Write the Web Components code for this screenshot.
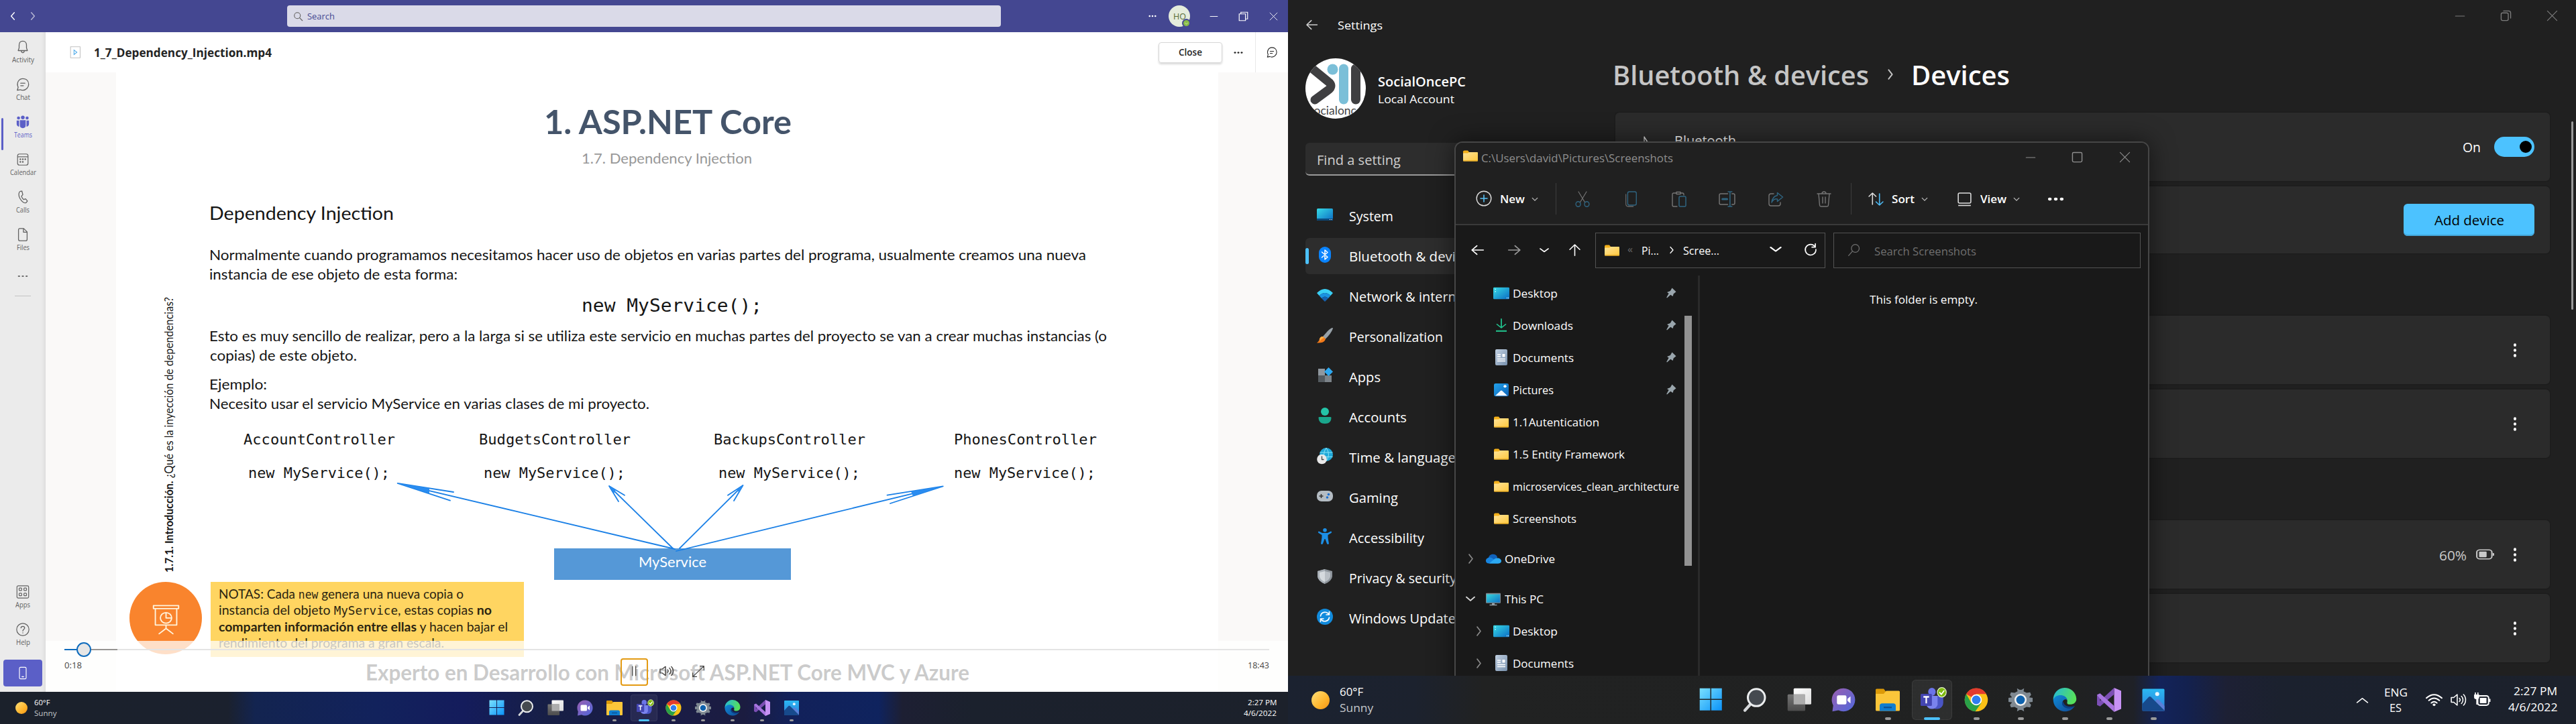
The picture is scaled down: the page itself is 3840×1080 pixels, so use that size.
<!DOCTYPE html>
<html lang="en">
<head>
<meta charset="utf-8">
<title>Desktop</title>
<style>
html,body{margin:0;padding:0;background:#202020}
body{display:flex;width:3840px;height:1080px;overflow:hidden;font-family:"Open Sans","Noto Sans",sans-serif}
</style>
</head>
<body>
<desk-screen><teams-app></teams-app><task-bar k="1"></task-bar></desk-screen>
<desk-screen><settings-app></settings-app><explorer-window></explorer-window><task-bar k="1.5"></task-bar></desk-screen>
<script>
const lin=(id,a,b,x2=1,y2=1)=>`<linearGradient id="${id}" x1="0" y1="0" x2="${x2}" y2="${y2}"><stop offset="0" stop-color="${a}"/><stop offset="1" stop-color="${b}"/></linearGradient>`;
const st=(d,w=1.4,c='currentColor',x='')=>`<path d="${d}" fill="none" stroke="${c}" stroke-width="${w}" stroke-linecap="round" stroke-linejoin="round" ${x}/>`;
const ICONS={
 chevL:st('M16 3L8 12L16 21',2.4), chevR:st('M8 3L16 12L8 21',2.6), chevD:st('M3 8L12 17L21 8',3), chevU:st('M3 17L12 8L21 17',2),
 search:st('M15 15L22 22',1.7)+`<circle cx="10" cy="10" r="7.2" fill="none" stroke="currentColor" stroke-width="1.7"/>`,
 searchFlip:st('M9 14L2 22',1.5)+`<circle cx="14" cy="9" r="7" fill="none" stroke="currentColor" stroke-width="1.5"/>`,
 more:`<g fill="currentColor"><circle cx="3.5" cy="12" r="2.6"/><circle cx="12" cy="12" r="2.6"/><circle cx="20.500" cy="12" r="2.6"/></g>`,
 moreV:`<g fill="currentColor"><circle cx="12" cy="3" r="2.7"/><circle cx="12" cy="12" r="2.7"/><circle cx="12" cy="21" r="2.7"/></g>`,
 min:st('M2 12H22',1.8), close:st('M2 2L22 22M22 2L2 22',1.6), max:`<rect x="2" y="2" width="20" height="20" rx="2.500" fill="none" stroke="currentColor" stroke-width="2"/>`,
 restore:`<path d="M2 6H17V22H2ZM6 6V2H22V18H17" fill="none" stroke="currentColor" stroke-width="1.9"/>`,
 restoreR:`<rect x="2" y="6" width="15" height="16" rx="3" fill="none" stroke="currentColor" stroke-width="1.900"/>`+st('M7 2H18Q22 2 22 6V17',1.9),
 bell:st('M12 2.500C8 2.500 6 5.500 6 9V13.500L4.500 18H19.500L18 13.500V9C18 5.500 16 2.500 12 2.500ZM9.500 18C9.700 20.500 10.700 21.500 12 21.500S14.300 20.500 14.500 18'),
 chat:st('M3 21.500L4.500 16.500C1.200 9.500 5.500 2.500 12 2.500S21.500 7 21.500 12S17 21.500 12 21.500C10.500 21.500 9 21.200 7.800 20.500ZM8.500 10H15.500M8.500 14H13'),
 teams:`<g fill="currentColor"><circle cx="5" cy="5.500" r="2.500"/><circle cx="12" cy="4.500" r="3"/><circle cx="19" cy="5.500" r="2.500"/><path d="M2 9.500H6V19.500Q2 19 2 15ZM22 9.500H18V19.500Q22 19 22 15ZM7.300 9H16.700V17Q16.700 22 12 22T7.300 17Z"/></g>`,
 cal:`<rect x="3.500" y="3" width="17" height="18" rx="3" fill="none" stroke="currentColor" stroke-width="1.300"/><path d="M3.500 7.500H20.500" stroke="currentColor" stroke-width="1.300"/><g fill="currentColor"><circle cx="8" cy="11.500" r="1.300"/><circle cx="12" cy="11.500" r="1.300"/><circle cx="16" cy="11.500" r="1.300"/><circle cx="8" cy="15.800" r="1.300"/><circle cx="12" cy="15.800" r="1.300"/></g>`,
 phone:st('M8 2.500L10.500 2.200L12 8L9.800 10.500C10.500 13 12 15 13.500 16L16.500 14.800L19.500 18.500L17.500 21C15 22.500 10.500 20 7.500 14.500S5 4 8 2.500Z'),
 file:st('M7 2H13.500L19 7.500V19.500Q19 22 16.500 22H7.500Q5 22 5 19.500V4.500Q5 2 7 2ZM13 2V8H19'),
 apps:`<g fill="none" stroke="currentColor" stroke-width="1.300"><rect x="2.500" y="2" width="19" height="20" rx="2"/><rect x="6" y="5.500" width="4.200" height="4.200" rx="1"/><rect x="13.800" y="5.500" width="4.200" height="4.200" rx="1"/><rect x="6" y="14" width="4.200" height="4.200" rx="1"/><rect x="13.800" y="14" width="4.200" height="4.200" rx="1"/></g>`,
 help:`<circle cx="12" cy="12" r="10" fill="none" stroke="currentColor" stroke-width="1.300"/>`+st('M9 9.500C9 6 15 6 15 9.500C15 11.800 12 11.800 12 14.500M12 17.300V17.600',1.4),
 mobile:st('M8 2.500H16Q18 2.500 18 4.500V19.500Q18 21.500 16 21.500H8Q6 21.500 6 19.500V4.500Q6 2.500 8 2.500ZM10.500 18H13.500'),
 video:`<rect x="4" y="1" width="18" height="22" fill="#fff" stroke="#bbb" stroke-width="1.200"/><path d="M10.500 7.500L16 12L10.500 16.500Z" fill="none" stroke="#4aa8e8" stroke-width="1.300"/>`,
 board:st('M2 2.500H22V5H2ZM3.500 5V19H20.500V5M12 19V22M12 22L6.500 26.500M12 22L17.500 26.500',1,'#fff3dc')+st('M12 8.500V13H16.500A4.500 4.500 0 1 1 12 8.500A4.500 4.500 0 0 1 16.500 13',1,'#fff3dc'),
 pause:st('M7 2V22M16 2V22',2.4), vol:st('M2 8.500V15.500H5.500L10.500 20V4L5.500 8.500ZM13.500 9.500C15 11 15 13 13.500 14.500M16.500 6.500C19.500 9.500 19.500 14.500 16.500 17.500M19.500 4C23.500 8 23.500 16 19.500 20',1.5),
 expand:st('M2 22L22 2M15 2H22V9M2 15V22H9',1.5),
 left:st('M22 12H3M11 3.500L2.500 12L11 20.500',2), right:st('M2 12H21M13 3.500L21.500 12L13 20.500',2), up:st('M12 22V3M3.500 11L12 2.500L20.500 11',1.8),
 refresh:st('M20 7.500A9.500 9.500 0 1 0 21.500 12M20.500 2V8H14.500',2),
 folder:`<defs>${lin('f','#ffe49a','#ffc83d')}</defs><path d="M1 4Q1 2 3 2H8L10 5V9H1Z" fill="#f4b01a"/><path d="M1 8Q1 7 2 7H8L10 5H22Q23 5 23 6V21Q23 22 22 22H2Q1 22 1 21Z" fill="url(#f)"/><path d="M1 20.500H23V21Q23 22 22 22H2Q1 22 1 21Z" fill="#e8a91f"/>`,
 desk:`<defs>${lin('d','#36dbe6','#0c6cc4')}</defs><rect x="0" y="2" width="24" height="20" rx="1.500" fill="url(#d)"/><path d="M2.500 5h1.500M2.500 9h1.500M20 20h1M22 20h1" stroke="#d8fbff" stroke-width="1.500"/>`,
 down:st('M12 1V15.500M5.500 10L12 16L18.500 10',1.8,'#21c08c')+`<path d="M4 21.500H20" stroke="#21c08c" stroke-width="2.400"/>`,
 docs:`<defs>${lin('o','#c1d0e2','#7891ad')}</defs><rect x="3" y="0" width="18" height="24" rx="2" fill="url(#o)"/><path d="M6 8H11M6 11H11M6 14.500H18M6 17.500H18" stroke="#fff" stroke-width="1.500"/><path d="M13.500 7H17.500V11.500H13.500Z" fill="#fff"/>`,
 pics:`<defs>${lin('p','#23a3ec','#0b62b8')}</defs><rect x="1" y="1" width="22" height="22" rx="2.500" fill="url(#p)"/><circle cx="17.500" cy="6" r="2.200" fill="#fff"/><path d="M3 22L11 13.500Q12 12.500 13 13.500L21 22Z" fill="#f2f8ff"/>`,
 pin:`<path d="M14 2L22 9.500L17 13.500L15.500 18.500L11 15.500L4 22L3 21L7.500 13L4 10.500L10.500 8Z" fill="#9aa6ad"/>`,
 cloud:`<path d="M5 10C6 3 16 2 18 9L15 17H5Z" fill="#1062bb"/><path d="M5.500 20C0 20-1 12 5 10C8 9 10 10.500 13 13L20 20Z" fill="#1785e0"/><path d="M6 20L13.500 12.500C18 9 24 11 24 16C24 18.500 22 20 20 20Z" fill="#2ca9f2"/>`,
 pc:`<defs>${lin('m','#36d6dc','#1072c6')}</defs><rect x="1" y="2" width="22" height="17" rx="1" fill="#808b92"/><rect x="2" y="4" width="20" height="14" fill="url(#m)"/><path d="M10 19H14V21.500H17.500V23H6.500V21.500H10Z" fill="#95a0a7"/>`,
 plus:`<circle cx="12" cy="12" r="10.800" fill="none" stroke="#ddd" stroke-width="1.400"/>`+st('M12 7V17M7 12H17',1.6,'#58c1f5'),
 cut:st('M5.500 1L16 17M18.500 1L8 17',1.3,'#757575')+`<g fill="none" stroke="#2f6480" stroke-width="1.500"><circle cx="5" cy="19.500" r="3.800"/><circle cx="19" cy="19.500" r="3.800"/></g>`,
 copy:`<rect x="7" y="1" width="14" height="20" rx="2.500" fill="none" stroke="#2f6480" stroke-width="1.500"/>`+st('M4 5V19Q4 23 8 23H16',1.3,'#6a6a6a'),
 paste:st('M8 3H4Q2 3 2 5V21Q2 23 4 23H9M14 3H17Q19 3 19 5V6M8 1.500H14V4.500H8Z',1.4,'#757575')+`<rect x="12" y="8" width="10" height="15" rx="1.500" fill="none" stroke="#2f6480" stroke-width="1.500"/>`,
 rename:st('M13 4H3Q1 4 1 6V18Q1 20 3 20H13M19 4H21Q23 4 23 6V18Q23 20 21 20H19',1.4,'#757575')+st('M13.500 1H19M16.200 1V23M13.500 23H19',1.500,'#2f6480')+st('M5.500 12H12',3,'#2f6480'),
 share:st('M9 4H5Q2 4 2 7V19Q2 22 5 22H16Q19 22 19 19V17',1.4,'#757575')+st('M14.500 2.500L22.500 9L14.500 15.500V12Q9 11 6 17Q7 8 14.500 6.500Z',1.5,'#2f6480'),
 trash:st('M2 4H22M9 4Q9 1 12 1T15 4M4 4L5.500 21Q5.700 23 7.500 23H16.500Q18.300 23 18.500 21L20 4M10 9V18M14 9V18',1.4,'#757575'),
 sort:st('M7 20V3M2 8L7 3L12 8',1.5,'#ddd')+st('M17 4V21M12 16L17 21L22 16',1.6,'#4cb7f0'),
 view:`<rect x="3" y="3" width="18" height="15" rx="2" fill="none" stroke="#ddd" stroke-width="1.500"/><path d="M3 21.500H21" stroke="#ddd" stroke-width="1.600"/>`,
 system:`<defs>${lin('s','#36dbe6','#0c6cc4')}</defs><rect y="3" width="24" height="18" rx="1.500" fill="url(#s)"/><path d="M0 18H24V19.500Q24 21 22.500 21H1.500Q0 21 0 19.500Z" fill="#0b4a7c"/><path d="M19 19.500h1M21.500 19.500h1" stroke="#fff"/>`,
 bt:`<rect x="3" y="0" width="18" height="24" rx="9" fill="#0a84ff"/>`+st('M7.500 8L16 15.500L12 19V5L16 8.500L7.500 16',1.500,'#fff'),
 btLine:st('M5 8L19 17L12 23V1L19 7L5 17',1.500,'#e8e8e8'),
 net:`<path d="M0 9Q12-3 24 9L20.500 13Q12 5 3.500 13Z" fill="#3ad0f5"/><path d="M3.500 13Q12 5 20.500 13L17 17Q12 12 7 17Z" fill="#1a92e0"/><path d="M7 17Q12 12 17 17L12 22Z" fill="#1461b0"/>`,
 brush:`<path d="M23.500 1Q21 1 16 6L9 14L12.500 18Q21 10 24 2Z" fill="#97a1a8"/><path d="M9 14L13 17.500Q12 24 0 23.500Q3.500 21 4 17.500Q5.500 13.500 9 14Z" fill="#f27a1a"/><path d="M4 17.500Q5.500 13.500 9 14L11 16Q7 17 5 21Z" fill="#ffae45"/>`,
 appsC:`<path d="M2 2H12V12H2Z" fill="#8f979e"/><path d="M2 12H12V22H2Z" fill="#555b60"/><path d="M12 12H22V22H12Z" fill="#7c8389"/><path d="M17.500 0L24 6.500L17.500 13L11 6.500Z" fill="#2ea8f0"/>`,
 person:`<circle cx="12" cy="6" r="6" fill="#24c4a8"/><path d="M2.500 14.500Q2.500 14 4 14H20Q21.500 14 21.500 15C21.500 21 18 24 12 24S2.500 21 2.500 14.500Z" fill="#1aa68c"/>`,
 time:`<circle cx="14" cy="10" r="10" fill="#20a8d8"/><path d="M14 0Q7 10 14 20Q21 10 14 0M4.500 7H23.500M4.500 13.500H23.500" fill="none" stroke="#86e2f5" stroke-width="1"/><circle cx="7.500" cy="17" r="7.300" fill="#e9e9e9"/>`+st('M7.500 13V17.500H10',1.300,'#444'),
 game:`<rect x="0" y="4" width="24" height="16" rx="7" fill="#b4bcc3"/><path d="M6.500 9V15M3.500 12H9.500" stroke="#333" stroke-width="1.600"/><circle cx="17.500" cy="9.500" r="1.800" fill="#1c6fd0"/><circle cx="15.500" cy="14" r="1.800" fill="#1c6fd0"/>`,
 access:`<circle cx="12" cy="2.800" r="2.800" fill="#1c8fe6"/><path d="M3 4.500L8 7H16L21 4.500Q23 5.500 21.500 7L16.500 10V14L18 23Q16.500 25 15 23L12.500 16H11.500L9 23Q7.500 25 6 23L7.500 14V10L2.500 7Q1 5.500 3 4.500Z" fill="#1c8fe6"/>`,
 shield:`<path d="M12 1L23 4V12Q22 19 12 23Q2 19 1 12V4Z" fill="#8d949b"/><path d="M12 1V23Q2 19 1 12V4Z" fill="#a9b0b7"/><path d="M12 4L20 6V12Q19 17 12 20Z" fill="#b9bfc5"/><path d="M12 4V20Q5 17 4 12V6Z" fill="#d5dade"/>`,
 update:`<circle cx="12" cy="12" r="12" fill="#118bdd"/>`+st('M5.500 11A6.800 6.800 0 0 1 18 8.500M18.500 4.500V9H14M18.500 13A6.800 6.800 0 0 1 6 15.500M5.500 19.500V15H10',1.600,'#fff'),
 batt:`<rect x="1" y="4" width="20" height="16" rx="4" fill="none" stroke="#c9c9c9" stroke-width="1.800"/><rect x="4" y="7" width="10" height="10" rx="1" fill="#c9c9c9"/><path d="M22 9.500H23Q24 9.500 24 10.500V13.500Q24 14.500 23 14.500H22Z" fill="#c9c9c9"/>`,
 win:`<defs>${lin('w','#7ae0ff','#0a92f8')}</defs><path d="M0.500 0.500H11.500V11.500H0.500ZM12.500 0.500H23.500V11.500H12.500ZM0.500 12.500H11.500V23.500H0.500ZM12.500 12.500H23.500V23.500H12.500Z" fill="url(#w)"/>`,
 tsearch:`<path d="M7 17L2 22.500" stroke="#d5d8da" stroke-width="2.800" stroke-linecap="round"/><circle cx="13.500" cy="9.700" r="8.500" fill="#454a50" stroke="#eceeef" stroke-width="2"/>`,
 tview:`<defs>${lin('t1','#ffffff','#dcdcdc')}${lin('t2','#747474','#4c4c4c',0,1)}</defs><rect x="6.500" y="0.500" width="17.500" height="16" rx="1" fill="url(#t1)"/><rect x="0.500" y="6.500" width="17.500" height="16.500" rx="1" fill="url(#t2)"/><path d="M6.500 6.500H18V16.500H6.500Z" fill="#adadad"/>`,
 tchat:`<defs>${lin('c','#9a5fb0','#5068dc')}</defs><path d="M12 0.500A11.500 11.500 0 1 1 7 22.300L1 23.500L1.800 17.500A11.500 11.500 0 0 1 12 0.500Z" fill="url(#c)"/><rect x="5.500" y="7.500" width="9.500" height="9" rx="1.500" fill="#fff"/><path d="M16 11L19 8.500V15.500L16 13Z" fill="#fff"/>`,
 texp:`<path d="M0 2Q0 1 1 1H8L10 3.500V8H0Z" fill="#dc9a08"/><path d="M0 6H8L10.500 3H23Q24 3 24 4V22Q24 23 23 23H1Q0 23 0 22Z" fill="#fbc63a"/><path d="M4 23V18Q4 15.500 6.500 15.500H17.500Q20 15.500 20 18V23Z" fill="#0f7dd0"/><path d="M8 19.500H16" stroke="#0b4f92" stroke-width="1.400"/>`,
 tteams:`<circle cx="12" cy="4" r="4" fill="#6b74e8"/><path d="M8 8H22Q24 8 24 10V15A6 6 0 0 1 18 21H15Z" fill="#4a55c5"/><path d="M6 8H18V17A6.500 6.500 0 0 1 6 17Z" fill="#7a83ee"/><rect x="0" y="6" width="12" height="12" rx="1" fill="#4446b2"/><path d="M3 9H9M6 9V15.500" stroke="#fff" stroke-width="1.600"/><circle cx="22.500" cy="4.500" r="4.700" fill="#7fba10" stroke="#e8f5c8" stroke-width=".8"/>`+st('M20.300 4.700L22 6.500L24.800 3',1.300,'#fff'),
 chrome:`<circle cx="12" cy="12" r="11.500" fill="#fbc116"/><path d="M12 12L2 6.200A11.500 11.500 0 0 1 22 6.200H12Z" fill="#e33b2e"/><path d="M2 6.200A11.500 11.500 0 0 0 11 23.500L17 15L7 15Z" fill="#2aa148"/><circle cx="12" cy="12" r="5.500" fill="#fff"/><circle cx="12" cy="12" r="4.300" fill="#2f7df0"/>`,
 gear:`<path d="M9 3.500L8.500 0.500L11 2H13L15.500 0.500L15 3.500L18 5L21.500 4.500L22.500 7L20.500 9.500L24 10V14L20.500 14.500L22.500 17L21.500 19.500L18 19L15 20.500L15.500 23.500L13 22H11L8.500 23.500L9 20.500L6 19L2.500 19.500L1.500 17L3.500 14.500L0 14V10L3.500 9.500L1.500 7L2.500 4.500L6 5Z" fill="#7f8992"/><circle cx="12" cy="12" r="6" fill="#f2f2f2"/><circle cx="12" cy="12" r="4.300" fill="#0e62ae"/>`,
 edge:`<defs>${lin('e','#23b8dc','#56e05c',1,.3)}${lin('g','#0f8ad8','#114a94')}</defs><path d="M0.500 12A11.500 11.500 0 0 1 23.500 11C23.500 15 20 17 16 16.500C13.500 16 14.500 14.500 14.500 13C14 8 5 6 0.500 12Z" fill="url(#e)"/><path d="M0.500 12C2 6 13 5.500 14.500 12C10 9.500 7 17 13 19.500C17 21 20 19.500 22 18C19 23 14 24 10 23.300C4 22 0.500 17 0.500 12Z" fill="url(#g)"/><path d="M9.500 14C8 18 13 21 17 20.500C19 20.300 21 19 22 18C18 19.500 11.500 19 10.500 14Z" fill="#0b3f85"/>`,
 vs:`<path d="M17 0L24 3V21L17 24Z" fill="#c792f5"/><path d="M0 7L3 6V18L0 17Z" fill="#7c4fb5"/><path d="M0 17L3 18.500L17 6.500V0L3 13Z" fill="#7c4fb5"/><path d="M0 7L3 5.500L17 18V24L3 11Z" fill="#a876e0"/>`,
 photo:`<defs>${lin('h','#2ab8f2','#2e7fdc',0,1)}</defs><rect x="1" y="1" width="22" height="22" rx="1" fill="url(#h)"/><path d="M10 17L15.500 11.500Q16.500 11 17.500 12L23 18V23H10Z" fill="#5b7fd8"/><path d="M1 16L7.500 9Q8.500 8.300 9.500 9L23 22.500V23H1Z" fill="#174a8c"/><circle cx="15.800" cy="6.200" r="2" fill="#e8f6ff"/>`,
 wifi:st('M1 9Q12-2 23 9M4.500 13Q12 5.500 19.500 13M8 17Q12 13 16 17',2,'#fff')+`<circle cx="12" cy="20" r="2" fill="#fff"/>`,
 plug:`<rect x="6" y="6" width="15" height="14" rx="3" fill="none" stroke="#fff" stroke-width="1.800"/><rect x="9" y="9" width="9" height="8" fill="#fff"/><path d="M21.500 10.500H23.500V15H21.500ZM1 4H8V8Q8 11 5.500 11V19H4V11Q1 11 1 8ZM2 1H3.500V4H2ZM5.500 1H7V4H5.500Z" fill="#fff"/>`,
 logo:`<defs><clipPath id="q"><circle cx="45" cy="45" r="45"/></clipPath></defs><g clip-path="url(#q)"><rect width="90" height="90" fill="#fff"/><path d="M11 16L33 34Q43 41 33 48L14 62" fill="none" stroke="#3f3f41" stroke-width="13" stroke-linecap="round" stroke-linejoin="round"/><circle cx="40.500" cy="16.500" r="8" fill="#7bbfd8"/><path d="M57 15.500V61.500" stroke="#7bbfd8" stroke-width="14" stroke-linecap="round"/><path d="M75 15.500V61.500" stroke="#3f3f41" stroke-width="14" stroke-linecap="round"/><text x="45" y="84" text-anchor="middle" textLength="80" lengthAdjust="spacingAndGlyphs" font-family="Lato" font-size="18" fill="#444">socialonce</text></g>`
};
const VB={board:'0 0 24 28',logo:'0 0 90 90'};
class UiIcon extends HTMLElement{
 constructor(){super();this.attachShadow({mode:'open'});}
 connectedCallback(){
  const n=this.getAttribute('name'),w=this.getAttribute('w'),h=this.getAttribute('h')||w;
  this.shadowRoot.innerHTML=`<style>:host{display:block;flex:none;width:${w}px;height:${h}px}svg{display:block;width:100%;height:100%;overflow:visible}</style><svg viewBox="${VB[n]||'0 0 24 24'}" preserveAspectRatio="none">${ICONS[n]}</svg>`;
 }
}
// One line of text condensed or widened to a given measure.
class TextLine extends HTMLElement{
 constructor(){super();this.attachShadow({mode:'open'});}
 connectedCallback(){
  const w=+this.getAttribute('w'),s=this.getAttribute('s');
  this.shadowRoot.innerHTML=`<style>:host{display:block;flex:none;width:${w}px;font-size:${s}px;white-space:nowrap}span{display:inline-block;vertical-align:top;transform-origin:0 50%;white-space:pre}</style><span><slot></slot></span>`;
  const sp=this.shadowRoot.querySelector('span');
  sp.style.transform=`scaleX(${w/parseFloat(getComputedStyle(sp).width)})`;
 }
}
const T=(t,w,s,css='')=>`<t-x w="${w}" s="${s}" style="${css}">${t}</t-x>`;
const I=(n,w,h=w,css='')=>`<ui-icon name="${n}" w="${w}" h="${h}" style="${css}"></ui-icon>`;
const ml=n=>`margin-left:${n}px;`;
const define=(tag,html)=>customElements.define(tag,class extends HTMLElement{
 constructor(){super();this.attachShadow({mode:'open'});}
 connectedCallback(){this.shadowRoot.innerHTML=typeof html==='function'?html(this):html;}
});

customElements.define('ui-icon',UiIcon);
customElements.define('t-x',TextLine);

define('desk-screen',`<style>:host{position:relative;display:flex;flex-direction:column;width:1920px;height:1080px;overflow:hidden;flex:none}</style><slot></slot>`);

define('rail-item',el=>`<style>:host{display:flex;flex-direction:column;align-items:center;height:56px;color:${el.hasAttribute('active')?'#5b5fc7':'#616161'};position:relative}
 .bar{position:absolute;left:2px;top:4px;width:2.500px;height:48px;background:#5b5fc7;border-radius:2px}</style>
 ${el.hasAttribute('active')?'<div class="bar"></div>':''}${I(el.getAttribute('icon'),22,22,'margin-top:-1px')}${T(el.getAttribute('label'),el.getAttribute('w'),10.2,'line-height:16px;margin-top:0px')}`);

define('video-slide',`<style>
:host{display:flex;flex-direction:column;position:relative;width:1643px;height:924px;background:#fff;font-family:Lato,sans-serif;color:#151515;margin-left:105px}
.m{font-family:"DejaVu Sans Mono",monospace}.r{display:flex}
svg.arrows{position:absolute;left:0;top:0;width:1643px;height:924px;overflow:visible}
.v{position:absolute;left:64px;top:333px;width:30px;height:413px}
.v>div{transform:rotate(-90deg);transform-origin:0 0;display:flex;margin-top:413px;width:413px;height:30px;line-height:30px}
.svc{margin:97px 0 0 653px;width:353px;height:47px;background:#5598d7;color:#fff;display:flex;justify-content:center}
.note{display:flex;margin:3px 0 0 20px}
.disc{width:108px;height:108px;border-radius:50%;background:#f9842d;display:flex;justify-content:center;align-items:center}
.card{margin-left:13px;width:467px;height:106px;padding-top:6px;background:#ffd561;color:#2b2410}
.card .r{height:24.300px;line-height:24.300px;padding-left:12px}
</style>
${T('1. ASP.NET Core',369,50.5,'font-weight:700;color:#44546a;line-height:60px;margin:43px 0 0 638px')}
${T('1.7. Dependency Injection',254,21.5,'color:#989898;line-height:30px;margin:10px 0 0 694px')}
${T('Dependency Injection',275,27.4,'line-height:40px;margin:47px 0 0 139px')}
${T('Normalmente cuando programamos necesitamos hacer uso de objetos en varias partes del programa, usualmente creamos una nueva',1307,22,'line-height:29px;margin:27px 0 0 139px')}
${T('instancia de ese objeto de esta forma:',370,22,'line-height:29px;margin:0 0 0 139px')}
<div class="r m">${T('new MyService();',269,26,'line-height:40px;margin:13px 0 0 694px')}</div>
${T('Esto es muy sencillo de realizar, pero a la larga si se utiliza este servicio en muchas partes del proyecto se van a crear muchas instancias (o',1338,22,'line-height:29px;margin:10px 0 0 139px')}
${T('copias) de este objeto.',219,22,'line-height:29px;margin:0 0 0 140px')}
${T('Ejemplo:',86,22,'line-height:29px;margin:14px 0 0 139px')}
${T('Necesito usar el servicio MyService en varias clases de mi proyecto.',656,22,'line-height:29px;margin:0 0 0 139px')}
<div class="r m" style="line-height:30px;margin-top:25px">${T('AccountController',226,20.5,ml(190))}${T('BudgetsController',226,20.5,ml(125))}${T('BackupsController',226,20.5,ml(124))}${T('PhonesController',213,20.5,ml(132))}</div>
<div class="r m" style="line-height:30px;margin-top:20px">${T('new MyService();',211,20.5,ml(197))}${T('new MyService();',211,20.5,ml(140))}${T('new MyService();',211,20.5,ml(139))}${T('new MyService();',211,20.5,ml(140))}</div>
<div class="svc">${T('MyService',101,21.5,'line-height:41px')}</div>
<div class="note"><div class="disc">${I('board',45,49,'margin-top:2px')}</div><div class="card">
<div class="r">${T('NOTAS: Cada <span style="font-family:DejaVu Sans Mono;font-size:.86em">new</span> genera una nueva copia o',365,19.5)}</div>
<div class="r">${T('instancia del objeto <span style="font-family:DejaVu Sans Mono;font-size:.9em">MyService</span>, estas copias <b>no</b>',407,19.5)}</div>
<div class="r">${T('<b>comparten información entre ellas</b> y hacen bajar el',431,19.5)}</div>
<div class="r">${T('rendimiento del programa a gran escala.',336,19.5)}</div></div></div>
${T('Experto en Desarrollo con Microsoft ASP.NET Core MVC y Azure',900,31.5,'font-weight:700;color:#383838;line-height:40px;margin:3px 0 0 372px')}
<div class="v"><div>${T('<b>1.7.1. Introducción.</b> ¿Qué es la inyección de dependencias?',411,17)}</div></div>
<svg class="arrows" viewBox="173 108 1643 924"><g fill="none" stroke="#1b80e6" stroke-width="1.800" stroke-linecap="round">
<path d="M1006 819L592.700 720.800L676 734M592.700 720.800L671 746.600"/><path d="M1003 818L908 725L931 738.700M908 725L922 748"/><path d="M1013 818L1107.500 724L1085 738.700M1107.500 724L1094 747"/><path d="M1008 822L1405.700 725.300L1322.500 738.700M1405.700 725.300L1327 751"/></g>
<g fill="#2a8cf0"><path d="M593 721L640 728L640 736Z"/><path d="M1405.700 725.300L1358 733L1361 740Z"/><path d="M908 725L918 731L915 736Z"/><path d="M1107.500 724L1098 730L1102 735Z"/></g></svg>`);

define('player-controls',`<style>
:host{position:absolute;left:0;bottom:0;width:100%;height:76px;display:flex;flex-direction:column;background:rgba(255,255,255,.74);color:#484644}
:host>div{display:flex;align-items:center}.track{height:24px;margin:1px 28px 0 28px}
.row{height:41px;margin-top:.500px}
i{display:block;height:2.500px}b{display:block;width:18px;height:18px;border-radius:50%;border:2px solid #0f6cbd;background:#e6e6e6;flex:none}
.pause{width:37px;height:37px;border:2px solid #e39a12;border-radius:4px;display:flex;justify-content:center;align-items:center}
</style><div class="track"><i style="width:18px;background:#0f6cbd"></i><b></b><i style="width:39px;background:#979593"></i><i style="flex:1;background:#e4e4e4"></i></div>
<div class="row">${T('0:18',26,12.8,ml(28)+'line-height:20px;margin-top:-20px')}<div class="pause" style="margin-left:803px">${I('pause',13,16,'margin-top:-2px')}</div>${I('vol',23,20,ml(16)+'margin-top:-2px')}${I('expand',20,19,ml(26)+'margin-top:-1px')}${T('18:43',32,12.8,'line-height:20px;margin:-20px 28px 0 auto')}</div>`);

define('teams-app',`<style>
:host{display:flex;flex-direction:column;height:1032px;background:#fff}
.bar{height:48px;background:#444791;color:#fff;display:flex;align-items:center;flex:none}
.find{width:1064px;height:32px;border-radius:4px;background:#dadae8;display:flex;align-items:center;color:#444791}
.av{position:relative;margin-left:18px;width:32px;height:32px;border-radius:50%;background:#e5ecdc;color:#566b35;display:flex;justify-content:center;align-items:center}
.ok{position:absolute;right:-1px;bottom:-1px;width:9px;height:9px;border-radius:50%;background:#88bc45;border:2px solid #444791;display:flex;align-items:center;justify-content:center}
.body{display:flex;flex:1;min-height:0}
nav{width:68px;background:#ebebeb;display:flex;flex-direction:column;padding-top:12px;box-sizing:border-box;flex:none;box-shadow:inset -5px 0 5px -3px #d9d9d9}
hr{width:24px;height:1px;border:0;background:#c4c4c4;margin:24px auto 0}
.call{width:58px;height:40px;border-radius:4px;background:#5b5fc7;color:#fff;display:flex;align-items:center;justify-content:center;margin:-1px auto 8px}
main{display:flex;flex-direction:column;flex:1}
header{height:60px;display:flex;align-items:center;color:#242424}
.btn{width:93px;height:29px;border:1px solid #d6d6d6;border-radius:4px;box-shadow:0 2px 3px rgba(0,0,0,.15);display:flex;justify-content:center;align-items:center;margin-left:auto}
.stage{position:relative;height:924px;background:#faf9f8}
</style>
<div class="bar">${I('chevL',14,14,ml(12))}${I('chevR',14,14,ml(16)+'opacity:.6')}
<div class="find" style="margin-left:372px">${I('search',15,15,ml(9)+'color:#605e5c')}${T('Search',41,13.5,ml(6))}</div>
${I('more',12,12,ml(220))}<div class="av">${T('HO',19,12,'font-weight:400')}<div class="ok">${I('chevD',5,4,'color:#fff')}</div></div>${I('min',13,13,ml(29))}${I('restore',15,15,ml(30))}${I('close',13,13,ml(31))}</div>
<div class="body"><nav>
<rail-item icon="bell" label="Activity" w="33"></rail-item><rail-item icon="chat" label="Chat" w="21"></rail-item><rail-item icon="teams" label="Teams" w="27" active></rail-item><rail-item icon="cal" label="Calendar" w="39"></rail-item><rail-item icon="phone" label="Calls" w="20"></rail-item><rail-item icon="file" label="Files" w="19"></rail-item>
${I('more',16,10,'margin:11px auto 0;color:#616161')}<hr>
<div style="flex:1"></div>
<rail-item icon="apps" label="Apps" w="22"></rail-item><rail-item icon="help" label="Help" w="21"></rail-item>
<div class="call">${I('mobile',20,22)}</div></nav>
<main><header>${I('video',19,18,ml(34))}${T('1_7_Dependency_Injection.mp4',265,17.4,ml(19)+'font-weight:700')}
<div class="btn">${T('Close',35,13.5,'font-weight:600')}</div>${I('more',14,11,ml(17))}<div style="${ml(18)}width:1px;height:60px;background:#e8e8e8"></div>${I('chat',18,18,'margin:0 15px 0 15px')}</header>
<div class="stage"><video-slide></video-slide><player-controls></player-controls></div></main></div>`);

const NAV=[['system','System',66],['bt','Bluetooth &amp; devices',190,1],['net','Network &amp; internet',178],['brush','Personalization',140],['appsC','Apps',47],['person','Accounts',86],['time','Time &amp; language',159],['game','Gaming',73],['access','Accessibility',112],['shield','Privacy &amp; security',160],['update','Windows Update',159]];
define('setting-card',el=>`<style>:host{display:flex;align-items:center;justify-content:flex-end;width:1393px;height:${el.getAttribute('h')||102}px;background:#2b2b2b;border-radius:6px;box-shadow:0 0 0 1.500px #1d1d1d;box-sizing:border-box;padding-right:${el.getAttribute('pr')||43}px;flex:none}</style><slot></slot>`);
define('settings-app',`<style>
:host{display:flex;flex-direction:column;height:1008px;background:#202020;color:#fff;position:relative}
.top{height:74px;display:flex;align-items:center;flex:none}
.ctl{display:flex;align-items:center;height:47px;align-self:flex-start;margin-left:auto;color:#7d7d7d}
.cols{display:flex}.side{width:460px;padding-left:26px;display:flex;flex-direction:column}
.me{display:flex;align-items:center;margin-top:13px;height:90px}
.find{margin-top:36px;width:420px;height:47px;line-height:50px;border-bottom:2px solid #9a9a9a;background:#2d2d2d;border-radius:6px;color:#cfcfcf}
ul{list-style:none;margin:33px 0 0;padding:0;display:flex;flex-direction:column;gap:6px}
li{height:54px;display:flex;align-items:center;border-radius:6px;width:420px}
li.on{background:#2d2d2d}li s{width:5px;height:24px;border-radius:3px;flex:none}li.on s{background:#4cc2ff}
.main{display:flex;flex-direction:column}
.h{display:flex;align-items:center;height:56px;margin-top:9px;font-weight:600}
.tog{width:60px;height:30px;border-radius:15px;background:#4cc2ff;margin-left:20px;display:flex;align-items:center;justify-content:flex-end}.tog i{width:18px;height:18px;border-radius:50%;background:#000;margin-right:4px}
.add{width:195px;height:48px;border-radius:6px;background:#4cc2ff;box-shadow:inset 0 -2px #43a5d8;color:#000;display:flex;align-items:center;justify-content:center}
.sb{position:absolute;right:4.500px;top:181px;width:3px;height:281px;background:#9a9a9a;border-radius:2px}
</style>
<div class="top">${I('left',19,18,ml(26)+'color:#ccc')}${T('Settings',67,16.8,ml(29))}<div class="ctl">${I('min',16,16)}${I('restoreR',17,17,ml(52))}${I('close',17,17,'margin:0 27px 0 52px')}</div></div>
<div class="cols"><div class="side"><div class="me">${I('logo',90)}<div style="${ml(18)}margin-top:2px">${T('SocialOncePC',131,19.6,'font-weight:600;line-height:28px')}${T('Local Account',114,16.4,'line-height:23px')}</div></div>
<div class="find">${T('Find a setting',125,20.300,ml(17))}</div>
<ul>${NAV.map(n=>`<li class="${n[3]?'on':''}"><s></s>${I(n[0],24,24,ml(12)+'margin-top:-4px')}${T(n[1],n[2],20,ml(24)+'margin-top:1px')}</li>`).join('')}</ul></div>
<div class="main"><div class="h">${T('Bluetooth &amp; devices',382,40,'color:#c5c5c5;'+ml(-2))}${I('chevR',16,18,ml(24)+'color:#c5c5c5')}${T('Devices',147,40,ml(23))}</div>
<setting-card pr="23" style="margin:29px 0 0 2px">${I('btLine',18,32,ml(34))}${T('Bluetooth',92,20,'margin:-20px auto 0 36px')}${T('On',27,20)}<div class="tog"><i></i></div></setting-card>
<setting-card h="100" pr="23" style="margin:8px 0 0 2px"><div class="add">${T('Add device',104,20.300)}</div></setting-card>
<setting-card style="margin:93px 0 0 2px">${I('moreV',18,21)}</setting-card>
<setting-card style="margin:8px 0 0 2px">${I('moreV',18,21)}</setting-card>
<setting-card style="margin:93px 0 0 2px">${T('60%',41,19.5,'color:#c9c9c9;margin-top:2px')}${I('batt',27,20,ml(14))}${I('moreV',18,21,ml(22))}</setting-card>
<setting-card style="margin:8px 0 0 2px">${I('moreV',18,21)}</setting-card>
</div></div><div class="sb"></div>`);

const TREE=[['desk','Desktop',67,1],['down','Downloads',90,1],['docs','Documents',91,1],['pics','Pictures',61,1],['folder','1.1Autentication',129],['folder','1.5 Entity Framework',167],['folder','microservices_clean_architecture',248],['folder','Screenshots',95]];
define('tree-row',el=>{const a=n=>el.getAttribute(n);return `<style>:host{display:flex;align-items:center;height:48px;flex:none;color:#fff}.c{width:${a('ind')}px;display:flex;justify-content:flex-end;flex:none}.t{flex:none}</style>
<div class="c">${a('chev')?I(a('chev'),a('chev')=='chevD'?16:15,a('chev')=='chevD'?14:17,'margin-right:14px;color:'+(a('chev')=='chevD'?'#d8d8d8':'#8b8b8b')):''}</div>${I(a('icon'),24,a('icon')=='docs'?24:a('icon')=='folder'?19:21)}<div class="t">${T(a('label'),a('w'),16.8,ml(5))}</div>${a('pin')?I('pin',18,18,'margin:0 31px 0 auto'):''}`});
define('explorer-window',`<style>
:host{position:absolute;left:248px;top:211px;width:1032px;height:900px;display:flex;flex-direction:column;background:#191919;border:2px solid #464646;border-radius:12px 12px 0 0;box-shadow:0 0 36px rgba(0,0,0,.55);color:#fff;overflow:hidden}
.t{height:46px;display:flex;align-items:center;background:#202020;color:#8e8e8e;flex:none}
.tb{height:75px;display:flex;align-items:center;background:#202020;border-bottom:2px solid #3a3a3a;flex:none}
.tb u{width:1px;height:47px;background:#3d3d3d}
.n{height:74px;display:flex;align-items:center;flex:none}
.box{height:51px;border:1px solid #535353;display:flex;align-items:center;box-sizing:content-box}
.b{display:flex;flex:1}.tree{width:361px;display:flex;flex-direction:column;position:relative;border-right:3px solid #2a2a2a;margin-top:1px}
.s{position:absolute;right:9px;top:60px;width:11px;height:373px;background:#929292}
</style>
<div class="t">${I('folder',24,19,ml(10)+'margin-top:-7px')}${T('C:\\Users\\david\\Pictures\\Screenshots',286,16.8,ml(4)+'margin-top:-2px')}${I('min',16,16,'margin:-3px 0 0 auto')}${I('max',17,17,ml(53)+'margin-top:-3px')}${I('close',17,17,'margin:-3px 26px 0 54px')}</div>
<div class="tb">${I('plus',24,24,ml(30)+'margin-top:-2px')}${T('New',37,16.8,ml(12)+'font-weight:600')}${I('chevD',10,10,ml(10)+'color:#bbb')}<u style="${ml(26)}"></u>
${I('cut',22,24,ml(28))}${I('copy',22,24,ml(50))}${I('paste',24,24,ml(49))}${I('rename',25,24,ml(47))}${I('share',24,24,ml(48))}${I('trash',24,24,ml(48))}<u style="${ml(28)}"></u>
${I('sort',25,24,ml(24))}${T('Sort',34,16.8,ml(11)+'font-weight:600')}${I('chevD',10,10,ml(10)+'color:#bbb')}${I('view',25,24,ml(42))}${T('View',39,16.8,ml(11)+'font-weight:600')}${I('chevD',10,10,ml(10)+'color:#bbb')}${I('more',25,20,ml(41))}</div>
<div class="n">${I('left',21,18,ml(22))}${I('right',21,18,ml(34)+'color:#999')}${I('chevD',16,12,ml(26))}${I('up',21,20,ml(27))}
<div class="box" style="${ml(20)}width:341px">${I('folder',24,19,ml(12))}${T('«',8,14,ml(11)+'color:#666;margin-top:-4px')}${T('Pi...',26,16.8,ml(13))}${I('chevR',12,12,ml(13))}${T('Scree...',54,16.8,ml(11))}${I('chevD',20,15,ml(74)+'margin-top:-3px')}${I('refresh',20,20,ml(32)+'margin-top:-3px')}</div>
<div class="box" style="${ml(12)}width:456px;color:#6f6f6f">${I('searchFlip',20,20,ml(20))}${T('Search Screenshots',152,16.8,ml(20)+'margin-top:2px')}</div></div>
<div class="b"><div class="tree" style="padding-top:2px">
${TREE.map(r=>`<tree-row ind="56" icon="${r[0]}" label="${r[1]}" w="${r[2]}" ${r[3]?'pin="1"':''}></tree-row>`).join('')}
<tree-row ind="44" chev="chevR" icon="cloud" label="OneDrive" w="75" style="margin-top:12px"></tree-row>
<tree-row ind="44" chev="chevD" icon="pc" label="This PC" w="58" style="margin-top:12px"></tree-row>
<tree-row ind="56" chev="chevR" icon="desk" label="Desktop" w="67"></tree-row>
<tree-row ind="56" chev="chevR" icon="docs" label="Documents" w="91"></tree-row>
<div class="s"></div></div>
${T('This folder is empty.',161,16.8,'margin:25px 0 0 253px')}</div>`);

define('task-bar',el=>{
 const k=+el.getAttribute('k'),big=k>1,p=n=>n*k;
 const apps=['win','tsearch','tview','tchat','texp','tteams','chrome','gear','edge','vs','photo'];
 return `<style>
 :host{display:flex;position:relative;height:${p(48)}px;flex:none;color:#fff;background:${big?'linear-gradient(90deg,#1b2230 0,#1c222e 190px,#212222 290px,#202121 1170px,#1f2127 1260px,#13235a 1300px,#13214f 1340px,#1d2034 1400px,#1b212e 1480px,#1c212b 100%)':'linear-gradient(90deg,#1b212b 0,#1b212e 340px,#132450 380px,#12225c 560px,#141c5c 690px,#171f45 820px,#1a1c48 960px,#1b1c40 1110px,#12215a 1180px,#0f235e 1310px,#1d1f33 1345px,#1b212d 1450px,#1c212b 100%)'}}
 .w{width:${big?597:718}px;display:flex;align-items:center;flex:none}
 .sun{width:${p(18)}px;height:${p(18)}px;border-radius:50%;margin:0 ${p(10)}px 0 ${p(23)}px;background:linear-gradient(135deg,#ffe07a,#ffb62e 60%,#f79413)}
 .a{width:${p(44)}px;height:${p(48)}px;display:flex;flex-direction:column;align-items:center;position:relative}
 .a.on::before{content:"";position:absolute;left:${p(2)}px;top:${p(4)}px;width:${p(40)-2}px;height:${p(40)-2}px;border-radius:${p(4)}px;background:rgba(255,255,255,.06);border:1px solid rgba(255,255,255,.07)}
 .a ui-icon{margin-top:${p(12)}px;position:relative}
 .a em{position:absolute;bottom:${p(4)}px;width:${p(6)}px;height:${p(3)}px;border-radius:${p(2)}px;background:#9a9a9a}.a.on em{width:${p(16)}px;background:#4cc2ff}
 .tray{margin-left:auto;display:flex;align-items:center}.c{display:flex;flex-direction:column;align-items:flex-end}
 </style>
 <div class="w"><div class="sun"></div><div>${T('60°F',p(23.5),p(11.4),`line-height:${p(16)}px`)}${T('Sunny',p(33.5),p(11.4),`line-height:${p(16)}px;color:#c3c6ca`)}</div></div>
 ${apps.map((n,i)=>`<div class="a ${i==5?'on':''}">${I(n,p(n=='win'?23:n=='tteams'?22.5:24),p(n=='win'?23:24))}${i>3?'<em></em>':''}</div>`).join('')}
 <div class="tray">${big?`${I('chevU',21,17)}<div class="c" style="align-items:center;${ml(22)}">${T('ENG',35,17,'line-height:23px')}${T('ES',18,17,'line-height:23px')}</div>${I('wifi',25,22,ml(27))}${I('vol',25,24,ml(11)+'color:#fff')}${I('plug',26,24,ml(10))}`:''}
 <div class="c" style="${big?ml(26)+'margin-right:28px':'margin-right:17px'};margin-top:${big?-2:-1}px">${T('2:27 PM',p(43.5),p(11.4),`line-height:${p(16)}px`)}${T('4/6/2022',p(49),p(11.4),`line-height:${p(16)}px`)}</div></div>`;
});
</script>
</body>
</html>
